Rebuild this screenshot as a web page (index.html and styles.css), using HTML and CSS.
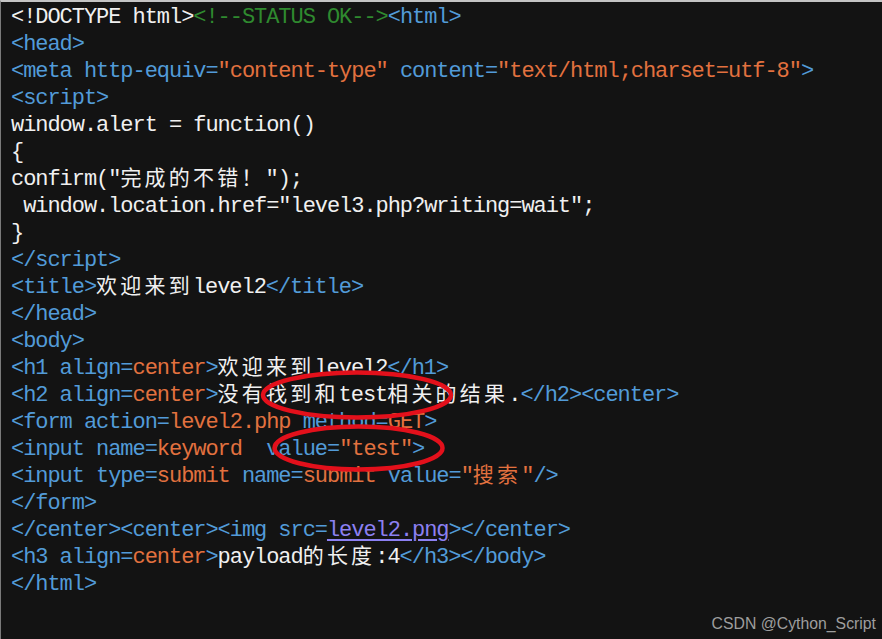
FILE: index.html
```html
<!DOCTYPE html>
<html lang="zh">
<head>
<meta charset="utf-8">
<title>level2 source</title>
<link rel="stylesheet" href="styles.css">
</head>
<body>
<div class="editor">
  <div class="code">
    <div class="ln"><span class="tx">&lt;!DOCTYPE html&gt;</span><span class="cm">&lt;!--STATUS OK--&gt;</span><span class="tg">&lt;html&gt;</span></div>
    <div class="ln"><span class="tg">&lt;head&gt;</span></div>
    <div class="ln"><span class="tg">&lt;meta http-equiv=</span><span class="vl">"content-type"</span><span class="tg"> content=</span><span class="vl">"text/html;charset=utf-8"</span><span class="tg">&gt;</span></div>
    <div class="ln"><span class="tg">&lt;script&gt;</span></div>
    <div class="ln"><span class="tx">window.alert = function()</span></div>
    <div class="ln"><span class="tx">{</span></div>
    <div class="ln"><span class="tx">confirm("<span class="cjk">完成的不错！</span>");</span></div>
    <div class="ln"><span class="tx"> window.location.href="level3.php?writing=wait";</span></div>
    <div class="ln"><span class="tx">}</span></div>
    <div class="ln"><span class="tg">&lt;/script&gt;</span></div>
    <div class="ln"><span class="tg">&lt;title&gt;</span><span class="tx"><span class="cjk">欢迎来到</span>level2</span><span class="tg">&lt;/title&gt;</span></div>
    <div class="ln"><span class="tg">&lt;/head&gt;</span></div>
    <div class="ln"><span class="tg">&lt;body&gt;</span></div>
    <div class="ln"><span class="tg">&lt;h1 align=</span><span class="vl">center</span><span class="tg">&gt;</span><span class="tx"><span class="cjk">欢迎来到</span>level2</span><span class="tg">&lt;/h1&gt;</span></div>
    <div class="ln"><span class="tg">&lt;h2 align=</span><span class="vl">center</span><span class="tg">&gt;</span><span class="tx"><span class="cjk">没有找到和</span>test<span class="cjk">相关的结果</span>.</span><span class="tg">&lt;/h2&gt;&lt;center&gt;</span></div>
    <div class="ln"><span class="tg">&lt;form action=</span><span class="vl">level2.php</span><span class="tg"> method=</span><span class="vl">GET</span><span class="tg">&gt;</span></div>
    <div class="ln"><span class="tg">&lt;input name=</span><span class="vl">keyword</span><span class="tg">  value=</span><span class="vl">"test"</span><span class="tg">&gt;</span></div>
    <div class="ln"><span class="tg">&lt;input type=</span><span class="vl">submit</span><span class="tg"> name=</span><span class="vl">submit</span><span class="tg"> value=</span><span class="vl">"<span class="cjk">搜索</span>"</span><span class="tg">/&gt;</span></div>
    <div class="ln"><span class="tg">&lt;/form&gt;</span></div>
    <div class="ln"><span class="tg">&lt;/center&gt;&lt;center&gt;&lt;img src=</span><span class="lk">level2.png</span><span class="tg">&gt;&lt;/center&gt;</span></div>
    <div class="ln"><span class="tg">&lt;h3 align=</span><span class="vl">center</span><span class="tg">&gt;</span><span class="tx">payload<span class="cjk">的长度</span>:4</span><span class="tg">&lt;/h3&gt;&lt;/body&gt;</span></div>
    <div class="ln"><span class="tg">&lt;/html&gt;</span></div>
  </div>
  <svg class="marks" width="882" height="639" viewBox="0 0 882 639" aria-hidden="true">
    <ellipse cx="357" cy="395" rx="94" ry="22.5" fill="none" stroke="#e3101b" stroke-width="4.5"/>
    <ellipse cx="358.5" cy="448" rx="84" ry="21.5" fill="none" stroke="#e3101b" stroke-width="4.5"/>
  </svg>
  <div class="watermark">CSDN @Cython_Script</div>
</div>
</body>
</html>
```

FILE: styles.css
```css
html, body {
  margin: 0;
  padding: 0;
  background: #131313;
}

.editor {
  position: relative;
  box-sizing: border-box;
  width: 882px;
  height: 639px;
  overflow: hidden;
  background: #131313;
  border-top: 2px solid #c4c4c4;
  border-left: 1px solid #7a7a7a;
}

.code {
  padding: 2px 0 0 10px;
  font-family: "Liberation Mono", "Noto Sans CJK SC", monospace;
  font-size: 22px;
  letter-spacing: -1.05px;
}

.ln {
  height: 27px;
  line-height: 27px;
  white-space: pre;
}

.cjk {
  font-family: "Noto Sans CJK SC", sans-serif;
  font-size: 21px;
  letter-spacing: 3.2px;
  line-height: 0;
}

.tx { color: #f0f0f0; }
.tg { color: #529bd8; }
.vl { color: #e2713f; }
.cm { color: #2f8a2f; }
.lk {
  color: #8c80f2;
  text-decoration: underline;
  text-underline-offset: 3px;
}

.marks {
  position: absolute;
  top: -2px;
  left: -1px;
  pointer-events: none;
}

.watermark {
  position: absolute;
  top: 613px;
  right: 6px;
  font-family: "Liberation Sans", Arial, sans-serif;
  font-size: 15.8px;
  color: #9e9e9e;
  white-space: nowrap;
}
```
